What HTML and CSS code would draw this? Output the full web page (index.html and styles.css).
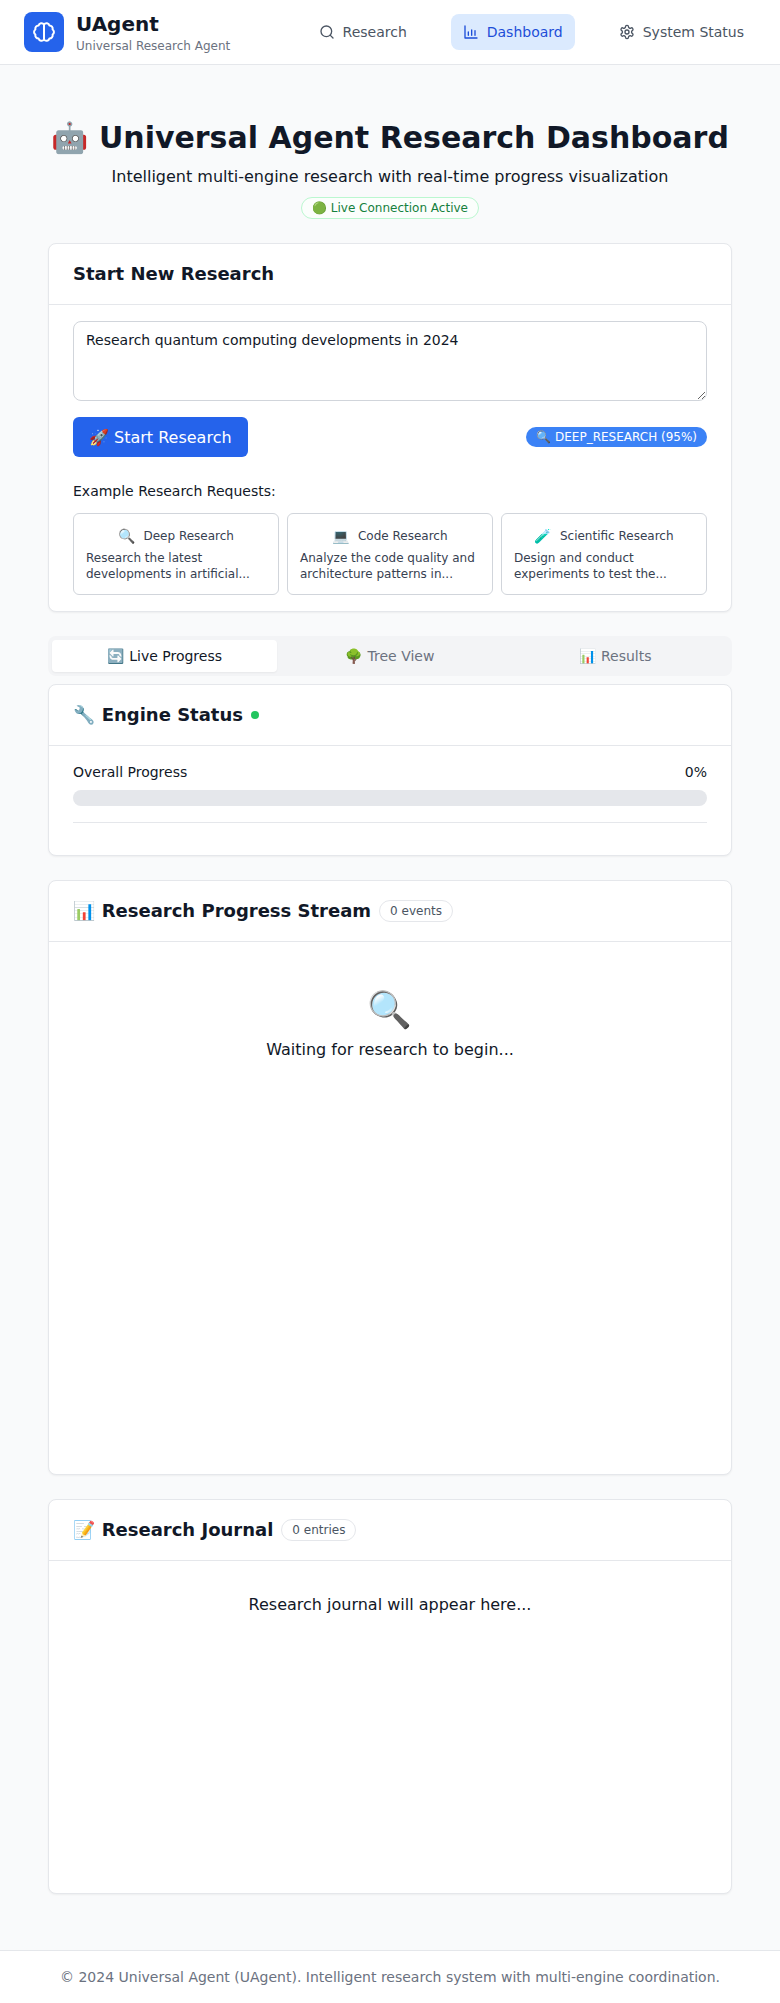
FILE: index.html
```html
<!DOCTYPE html>
<html lang="en">
<head>
<meta charset="utf-8">
<title>UAgent</title>
<link rel="stylesheet" href="styles.css">
</head>
<body>
<header class="topbar">
  <div class="brand">
    <div class="logo">
      <svg viewBox="0 0 24 24" width="24" height="24" fill="none" stroke="#fff" stroke-width="2" stroke-linecap="round" stroke-linejoin="round"><path d="M12 4.500v15"/><path d="M12 4.500A3 3 0 0 0 6.600 5.500 3.200 3.200 0 0 0 3.400 9.500 3 3 0 0 0 3.400 14.500 3.200 3.200 0 0 0 6.600 18.500 3 3 0 0 0 12 19.500"/><path d="M12 4.500A3 3 0 0 1 17.400 5.500 3.200 3.200 0 0 1 20.600 9.500 3 3 0 0 1 20.600 14.500 3.200 3.200 0 0 1 17.400 18.500 3 3 0 0 1 12 19.500"/></svg>
    </div>
    <div class="brand-text">
      <div class="brand-name">UAgent</div>
      <div class="brand-sub">Universal Research Agent</div>
    </div>
  </div>
  <nav class="nav">
    <a class="nav-link"><svg viewBox="0 0 24 24" width="16" height="16" fill="none" stroke="currentColor" stroke-width="2" stroke-linecap="round" stroke-linejoin="round"><circle cx="11" cy="11" r="8"/><path d="m21 21-4.300-4.300"/></svg>Research</a>
    <a class="nav-link active"><svg viewBox="0 0 24 24" width="16" height="16" fill="none" stroke="currentColor" stroke-width="2" stroke-linecap="round" stroke-linejoin="round"><path d="M3 3v18h18"/><path d="M8 17v-5"/><path d="M13 17V9"/><path d="M18 17v-7"/></svg>Dashboard</a>
    <a class="nav-link"><svg viewBox="0 0 24 24" width="16" height="16" fill="none" stroke="currentColor" stroke-width="2" stroke-linecap="round" stroke-linejoin="round"><path d="M12.220 2h-.44a2 2 0 0 0-2 2v.18a2 2 0 0 1-1 1.730l-.43.25a2 2 0 0 1-2 0l-.15-.08a2 2 0 0 0-2.730.73l-.22.38a2 2 0 0 0 .73 2.730l.15.1a2 2 0 0 1 1 1.720v.51a2 2 0 0 1-1 1.740l-.15.09a2 2 0 0 0-.73 2.730l.22.38a2 2 0 0 0 2.730.73l.15-.08a2 2 0 0 1 2 0l.43.25a2 2 0 0 1 1 1.730V20a2 2 0 0 0 2 2h.44a2 2 0 0 0 2-2v-.18a2 2 0 0 1 1-1.730l.43-.25a2 2 0 0 1 2 0l.15.08a2 2 0 0 0 2.730-.73l.22-.39a2 2 0 0 0-.73-2.730l-.15-.08a2 2 0 0 1-1-1.740v-.5a2 2 0 0 1 1-1.740l.15-.09a2 2 0 0 0 .73-2.730l-.22-.38a2 2 0 0 0-2.730-.73l-.15.08a2 2 0 0 1-2 0l-.43-.25a2 2 0 0 1-1-1.730V4a2 2 0 0 0-2-2z"/><circle cx="12" cy="12" r="3"/></svg>System Status</a>
  </nav>
</header>

<main class="main">
  <section class="hero">
    <h1 class="hero-title">🤖 Universal Agent Research Dashboard</h1>
    <p class="hero-sub">Intelligent multi-engine research with real-time progress visualization</p>
    <span class="live-pill">🟢 Live Connection Active</span>
  </section>

  <section class="card start-card">
    <div class="card-head"><h2 class="card-title">Start New Research</h2></div>
    <div class="start-body">
      <textarea class="query" rows="3">Research quantum computing developments in 2024</textarea>
      <div class="action-row">
        <button class="start-btn">🚀 Start Research</button>
        <span class="engine-badge">🔍 DEEP_RESEARCH (95%)</span>
      </div>
      <div class="examples-label">Example Research Requests:</div>
      <div class="examples">
        <div class="example">
          <div class="example-title"><span class="example-icon">🔍</span><span>Deep Research</span></div>
          <div class="example-desc">Research the latest developments in artificial...</div>
        </div>
        <div class="example">
          <div class="example-title"><span class="example-icon">💻</span><span>Code Research</span></div>
          <div class="example-desc">Analyze the code quality and architecture patterns in...</div>
        </div>
        <div class="example">
          <div class="example-title"><span class="example-icon">🧪</span><span>Scientific Research</span></div>
          <div class="example-desc">Design and conduct experiments to test the...</div>
        </div>
      </div>
    </div>
  </section>

  <div class="tabs">
    <div class="tab active">🔄 Live Progress</div>
    <div class="tab">🌳 Tree View</div>
    <div class="tab">📊 Results</div>
  </div>

  <section class="card engine-card">
    <div class="card-head"><h2 class="card-title">🔧 Engine Status</h2><span class="dot"></span></div>
    <div class="engine-body">
      <div class="progress-row"><span>Overall Progress</span><span>0%</span></div>
      <div class="progress-track"></div>
      <div class="progress-rule"></div>
    </div>
  </section>

  <section class="card">
    <div class="card-head"><h2 class="card-title">📊 Research Progress Stream</h2><span class="count-pill">0 events</span></div>
    <div class="stream-body">
      <div class="empty">
        <div class="empty-icon">🔍</div>
        <div class="empty-text">Waiting for research to begin...</div>
      </div>
    </div>
  </section>

  <section class="card">
    <div class="card-head"><h2 class="card-title">📝 Research Journal</h2><span class="count-pill">0 entries</span></div>
    <div class="journal-body">
      <div class="journal-empty">Research journal will appear here...</div>
    </div>
  </section>
</main>

<footer class="footer">© 2024 Universal Agent (UAgent). Intelligent research system with multi-engine coordination.</footer>
</body>
</html>
```
FILE: styles.css
```css
* { box-sizing: border-box; }
html, body { margin: 0; padding: 0; }
body {
  background: #f9fafb;
  color: #111827;
  font-family: "DejaVu Sans", "Noto Color Emoji", sans-serif;
  font-size: 16px;
  line-height: 24px;
}
h1, h2, p { margin: 0; }

.topbar {
  display: flex;
  align-items: center;
  justify-content: space-between;
  height: 65px;
  padding: 0 24px;
  background: #fff;
  border-bottom: 1px solid #e5e7eb;
}
.brand { display: flex; align-items: center; gap: 12px; }
.logo {
  width: 40px;
  height: 40px;
  border-radius: 8px;
  background: #2563eb;
  display: flex;
  align-items: center;
  justify-content: center;
}
.brand-name { font-size: 20px; line-height: 28px; font-weight: 700; color: #111827; }
.brand-sub { font-size: 12px; line-height: 16px; color: #6b7280; }
.nav { display: flex; gap: 32px; }
.nav-link {
  display: flex;
  align-items: center;
  gap: 8px;
  height: 36px;
  padding: 0 12px;
  border-radius: 8px;
  font-size: 14px;
  line-height: 20px;
  color: #4b5563;
}
.nav-link.active { background: #dbeafe; color: #1d4ed8; }

.main { padding: 53px 48px 32px; }

.hero { text-align: center; margin-bottom: 24px; }
.hero-title { font-size: 30px; line-height: 40px; font-weight: 700; color: #111827; white-space: nowrap; }
.hero-sub { margin-top: 7px; font-size: 16px; line-height: 24px; color: #111827; }
.live-pill {
  display: inline-block;
  margin-top: 8px;
  padding: 2px 10px;
  font-size: 12px;
  line-height: 16px;
  color: #15803d;
  background: #fbfefc;
  border: 1px solid #bbf7d0;
  border-radius: 999px;
}

.card {
  background: #fff;
  border: 1px solid #e5e7eb;
  border-radius: 8px;
  box-shadow: 0 1px 2px rgba(0, 0, 0, 0.05);
  margin-bottom: 24px;
}
.card-head {
  display: flex;
  align-items: center;
  gap: 8px;
  padding: 16px 24px;
  border-bottom: 1px solid #e5e7eb;
}
.card-title { font-size: 18px; line-height: 28px; font-weight: 700; color: #111827; }

.start-body { padding: 16px 24px; }
.query {
  display: block;
  width: 100%;
  height: 80px;
  padding: 8px 12px;
  border: 1px solid #d1d5db;
  border-radius: 8px;
  background: #fff;
  font-family: inherit;
  font-size: 14px;
  line-height: 20px;
  color: #111827;
}
.action-row {
  display: flex;
  align-items: center;
  justify-content: space-between;
  margin-top: 16px;
}
.start-btn {
  height: 40px;
  padding: 0 16px;
  border: 0;
  border-radius: 6px;
  background: #2563eb;
  color: #fff;
  font-family: inherit;
  font-size: 16px;
}
.engine-badge {
  padding: 2px 10px;
  border-radius: 999px;
  background: #3b82f6;
  color: #fff;
  font-size: 12px;
  line-height: 16px;
}
.examples-label { margin-top: 24px; font-size: 14px; line-height: 20px; color: #111827; }
.examples {
  display: grid;
  grid-template-columns: repeat(3, 1fr);
  gap: 8px;
  margin-top: 12px;
}
.example {
  padding: 12px;
  border: 1px solid #d1d5db;
  border-radius: 6px;
  background: #fff;
  font-size: 12px;
  line-height: 16px;
  color: #374151;
}
.example-title { display: flex; justify-content: center; gap: 8px; margin-bottom: 4px; line-height: 20px; }
.example-icon { font-size: 14px; }
.example-desc { line-height: 16px; }

.tabs {
  display: grid;
  grid-template-columns: repeat(3, 1fr);
  padding: 4px;
  margin-bottom: 8px;
  background: #f3f4f6;
  border-radius: 8px;
}
.tab {
  height: 32px;
  display: flex;
  align-items: center;
  justify-content: center;
  font-size: 14px;
  color: #6b7280;
  border-radius: 4px;
}
.tab.active { background: #fff; color: #111827; box-shadow: 0 1px 2px rgba(0, 0, 0, 0.05); }

.dot { width: 8px; height: 8px; border-radius: 50%; background: #22c55e; }
.engine-body { padding: 16px 24px 32px; }
.progress-row {
  display: flex;
  justify-content: space-between;
  font-size: 14px;
  line-height: 20px;
  color: #111827;
}
.progress-track { height: 16px; margin-top: 8px; border-radius: 999px; background: #e5e7eb; }
.progress-rule { margin-top: 16px; border-top: 1px solid #e5e7eb; }

.count-pill {
  padding: 2px 10px;
  border: 1px solid #e5e7eb;
  border-radius: 999px;
  background: #fff;
  color: #4b5563;
  font-size: 12px;
  line-height: 16px;
}
.stream-body { height: 532px; padding: 16px 24px; }
.empty { padding: 32px 0; text-align: center; }
.empty-icon { font-size: 36px; line-height: 40px; margin-bottom: 8px; }
.empty-text { font-size: 16px; line-height: 24px; color: #111827; }
.journal-body { height: 332px; padding: 16px 24px; }
.journal-empty { padding: 16px 0; text-align: center; font-size: 16px; line-height: 24px; color: #111827; }

.footer {
  padding: 16px 0 17px;
  background: #fff;
  border-top: 1px solid #e5e7eb;
  text-align: center;
  font-size: 14px;
  line-height: 20px;
  color: #6b7280;
}
```
